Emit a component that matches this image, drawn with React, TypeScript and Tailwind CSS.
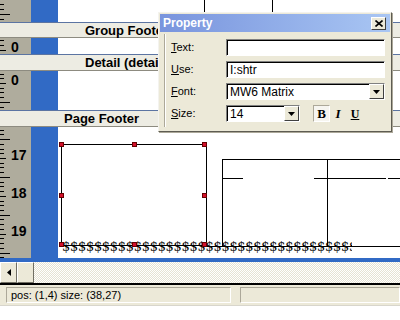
import React from "react";

type Lbl = { t: string; y: number };

function Ruler({ h, top, origin, labels = [] }: { h: number; top: number; origin: number; labels?: Lbl[] }) {
  const step = 37.8 / 8;
  const ticks: React.ReactNode[] = [];
  for (let k = -80; k < 80; k++) {
    const y = origin + 3 + k * step - top;
    if (y < 0 || y > h) continue;
    const m = ((k % 8) + 8) % 8;
    const len = m === 4 ? 10 : m === 0 ? 6 : 4;
    const yy = Math.round(y) + 0.5;
    ticks.push(<line key={k} x1={0} x2={len} y1={yy} y2={yy} stroke="#000" strokeWidth={1} />);
  }
  return (
    <svg width={31} height={h} className="block shrink-0 bg-[#afac9d]">
      {ticks}
      {labels.map((l) => (
        <text
          key={l.t + l.y}
          x={11}
          y={l.y - top + 5}
          fontFamily="Liberation Sans, Arial, sans-serif"
          fontWeight="bold"
          fontSize={14}
          fill="#000"
        >
          {l.t}
        </text>
      ))}
    </svg>
  );
}

function Row({
  hClass,
  h,
  top,
  origin,
  labels,
  children,
}: {
  hClass: string;
  h: number;
  top: number;
  origin: number;
  labels?: Lbl[];
  children?: React.ReactNode;
}) {
  return (
    <div className={"flex shrink-0 " + hClass}>
      <Ruler h={h} top={top} origin={origin} labels={labels} />
      <div className="w-[27px] shrink-0 bg-[#316ac5]" />
      <div className="relative flex-1 bg-white">{children}</div>
    </div>
  );
}

function Band({ cls, label }: { cls: string; label: string }) {
  return (
    <div
      className={
        "flex shrink-0 items-center whitespace-nowrap border-t border-b border-t-[#5b74a2] border-b-[#8d8b80] bg-[#edece3] text-[13px] font-bold leading-none " +
        cls
      }
    >
      {label}
    </div>
  );
}

function DropBtn() {
  return (
    <div className="flex h-[15px] w-[15px] shrink-0 items-center justify-center border border-t-white border-l-white border-r-[#404040] border-b-[#404040] bg-[#ece9d8]">
      <svg width="7" height="4" viewBox="0 0 7 4">
        <path d="M0 0H7L3.5 4Z" fill="#000" />
      </svg>
    </div>
  );
}

const sunken =
  "border border-t-[#808080] border-l-[#808080] border-r-white border-b-white shadow-[inset_1px_1px_0_#000] bg-white";

function Label({ first, rest }: { first: string; rest: string }) {
  return (
    <div className="w-[55px] shrink-0 text-[11px] leading-none">
      <span className="underline underline-offset-[1px]">{first}</span>
      {rest}
    </div>
  );
}

export default function App() {
  const dollars = "$".repeat(40);
  return (
    <div className="relative h-[320px] w-[400px] overflow-hidden bg-white font-['Liberation_Sans',Arial,sans-serif] text-black">
      <div className="flex flex-col">
        <Row hClass="h-[22px]" h={22} top={0} origin={-8}>
          <div className="absolute left-[146px] top-0 h-full w-px bg-black" />
          <div className="absolute left-[214px] top-0 h-full w-px bg-black" />
        </Row>
        <Band cls="h-[16px] pl-[85px]" label="Group Footer" />
        <Row hClass="h-[16px]" h={16} top={38} origin={46.5} labels={[{ t: "0", y: 46.5 }]} />
        <Band cls="h-[17px] pl-[85px]" label="Detail (detail)" />
        <Row hClass="h-[39px]" h={39} top={71} origin={80} labels={[{ t: "0", y: 80 }]} />
        <Band cls="h-[17px] pl-[64px]" label="Page Footer" />
        <Row
          hClass="h-[131px]"
          h={131}
          top={127}
          origin={155}
          labels={[
            { t: "17", y: 155 },
            { t: "18", y: 192.8 },
            { t: "19", y: 230.6 },
          ]}
        >
          {/* selected rectangle */}
          <div className="absolute left-[3px] top-[17px] h-[102px] w-[146px] border border-black" />
          {/* right table */}
          <div className="absolute left-[164px] top-[32px] h-[88px] w-[200px] border-t border-l border-black" />
          <div className="absolute left-[269px] top-[32px] h-[88px] w-px bg-black" />
          <div className="absolute left-[164px] top-[51px] h-px w-[21px] bg-black" />
          <div className="absolute left-[256px] top-[51px] h-px w-[72px] bg-black" />
          <div className="absolute left-[330px] top-[51px] h-px w-[20px] bg-black" />
          <div className="absolute left-[149px] top-[119px] h-px w-[200px] bg-black" />
          {/* barcode text */}
          <div className="absolute left-[4px] top-[113px] h-[13px] w-[290px] overflow-hidden whitespace-nowrap font-['DejaVu_Serif',serif] text-[13px] leading-[13px] tracking-[-0.3px]">
            {dollars}
          </div>
          {/* handles */}
          <div className="absolute left-[1px] top-[15px] h-[5px] w-[5px] border border-[#600] bg-[#d4102c]" />
          <div className="absolute left-[74px] top-[15px] h-[5px] w-[5px] border border-[#600] bg-[#d4102c]" />
          <div className="absolute left-[144px] top-[15px] h-[5px] w-[5px] border border-[#600] bg-[#d4102c]" />
          <div className="absolute left-[1px] top-[66px] h-[5px] w-[5px] border border-[#600] bg-[#d4102c]" />
          <div className="absolute left-[144px] top-[66px] h-[5px] w-[5px] border border-[#600] bg-[#d4102c]" />
          <div className="absolute left-[1px] top-[115px] h-[5px] w-[5px] border border-[#600] bg-[#d4102c]" />
          <div className="absolute left-[74px] top-[115px] h-[5px] w-[5px] border border-[#600] bg-[#d4102c]" />
          <div className="absolute left-[144px] top-[115px] h-[5px] w-[5px] border border-[#600] bg-[#d4102c]" />
        </Row>
        <div className="h-[4px] shrink-0 bg-[#316ac5]" />
        {/* scrollbar */}
        <div className="flex h-[21px] shrink-0 bg-[#f3f2ec]">
          <div className="flex h-full w-[17px] items-center justify-center border border-t-white border-l-white border-r-[#716f64] border-b-[#716f64] bg-[#ece9d8]">
            <svg width="4" height="7" viewBox="0 0 4 7">
              <path d="M4 0V7L0 3.5Z" fill="#000" />
            </svg>
          </div>
          <div className="h-full w-[17px] border border-t-white border-l-white border-r-[#716f64] border-b-[#716f64] bg-[#ece9d8]" />
          <div className="flex-1 bg-[repeating-conic-gradient(#e6e3d3_0_25%,#ffffff_0_50%)] bg-[length:2px_2px]" />
        </div>
        <div className="h-[2px] shrink-0 bg-black" />
        {/* status bar */}
        <div className="flex h-[21px] shrink-0 items-center gap-[9px] border-b border-b-[#d8d6cc] bg-[#ece9d8] pl-[6px]">
          <div className="flex h-[16px] w-[225px] items-center border border-t-[#aca899] border-l-[#aca899] border-r-white border-b-white pl-[4px] text-[11px] leading-none">
            pos: (1,4) size: (38,27)
          </div>
          <div className="h-[16px] flex-1 border border-t-[#aca899] border-l-[#aca899] border-r-white border-b-white" />
        </div>
      </div>

      {/* Property dialog */}
      <div className="absolute left-[158px] top-[12px] flex h-[120px] w-[234px] flex-col border border-t-[#f4f3ee] border-l-[#f4f3ee] border-r-[#5e5c52] border-b-[#5e5c52] bg-[#ece9d8] shadow-[1px_1px_0_#aca899]">
        <div className="mx-[1px] mt-[1px] flex h-[18px] shrink-0 items-center justify-between bg-linear-to-r from-[#7994dd] to-[#a9c6f3] pl-[3px] pr-[4px]">
          <span className="text-[12px] font-bold leading-none text-white">Property</span>
          <div className="flex h-[13px] w-[15px] items-center justify-center border border-t-white border-l-white border-r-[#404040] border-b-[#404040] bg-[#ece9d8]">
            <svg width="8" height="7" viewBox="0 0 8 7">
              <path d="M0.5 0.5L7.5 6.5M7.5 0.5L0.5 6.5" stroke="#000" strokeWidth="1.6" />
            </svg>
          </div>
        </div>
        <div className="flex flex-1 pb-[4px] pl-[5px] pt-[2px]">
          <div className="flex flex-1 flex-col gap-[5px] border-l border-l-[#aca899] pl-[6px] pr-[6px] pt-[5px] shadow-[inset_1px_0_0_#fff]">
            <div className="flex h-[17px] items-center">
              <Label first="T" rest="ext:" />
              <div className={"h-[17px] flex-1 " + sunken} />
            </div>
            <div className="flex h-[17px] items-center">
              <Label first="U" rest="se:" />
              <div className={"flex h-[17px] flex-1 items-center pl-[3px] text-[12px] leading-none " + sunken}>
                I:shtr
              </div>
            </div>
            <div className="flex h-[17px] items-center">
              <Label first="F" rest="ont:" />
              <div className={"flex h-[17px] flex-1 items-center justify-between pl-[3px] text-[12px] leading-none " + sunken}>
                <span>MW6 Matrix</span>
                <DropBtn />
              </div>
            </div>
            <div className="flex h-[17px] items-center">
              <Label first="S" rest="ize:" />
              <div className={"flex h-[17px] w-[74px] items-center justify-between pl-[3px] text-[12px] leading-none " + sunken}>
                <span>14</span>
                <DropBtn />
              </div>
              <div className="ml-[13px] flex h-[17px] w-[17px] items-center justify-center border border-t-[#aca899] border-l-[#aca899] border-r-white border-b-white bg-[#f6f5f0] font-['Liberation_Serif',serif] text-[13px] font-bold leading-none">
                B
              </div>
              <div className="ml-[1px] flex h-[17px] w-[14px] items-center justify-center font-['Liberation_Serif',serif] text-[13px] font-bold italic leading-none">
                I
              </div>
              <div className="ml-[3px] flex h-[17px] w-[14px] items-center justify-center font-['Liberation_Serif',serif] text-[12px] font-bold leading-none underline">
                U
              </div>
            </div>
          </div>
        </div>
      </div>
    </div>
  );
}
